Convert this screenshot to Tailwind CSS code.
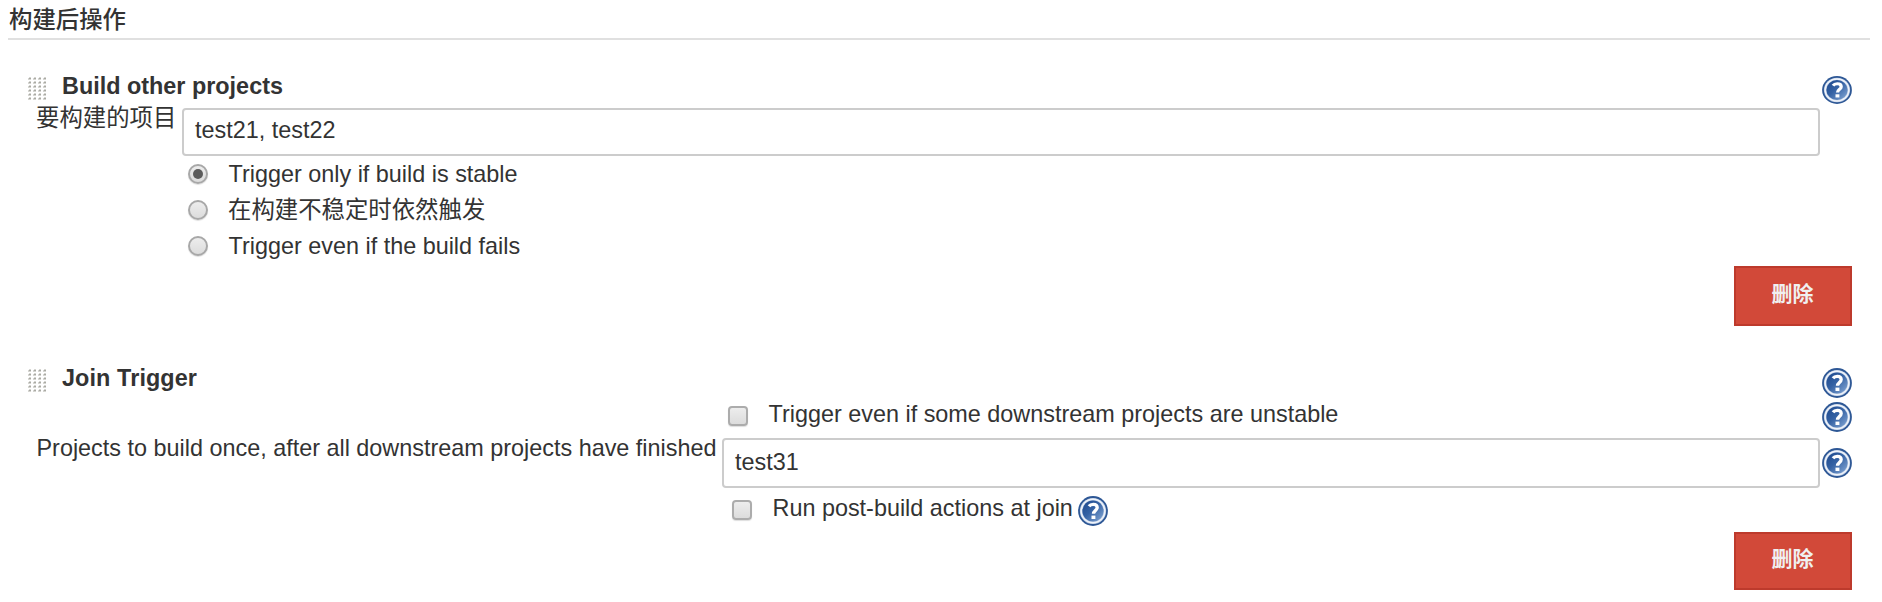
<!DOCTYPE html>
<html lang="zh-CN">
<head>
<meta charset="utf-8">
<title>构建后操作</title>
<script src="https://cdn.jsdelivr.net/npm/@tailwindcss/browser@4"></script>
</head>
<body class="h-[602px] overflow-hidden bg-white font-['Liberation_Sans','Noto_Sans_CJK_SC',sans-serif] text-[23.4px] leading-[30px] text-[#333] whitespace-nowrap">
<svg class="absolute size-0">
  <defs>
    <linearGradient id="blue" x1="0" y1="0" x2="1" y2="1"><stop offset="0" stop-color="#1c478c"/><stop offset=".45" stop-color="#3562a4"/><stop offset="1" stop-color="#86a9d6"/></linearGradient>
    <pattern id="dots" width="5" height="4" patternUnits="userSpaceOnUse"><path d="M0 1h1V0h2v3H0z" fill="#d6d6d2"/><path d="M1 1h2v1H1z" fill="#aaaaa4"/></pattern>
    <symbol id="grip" viewBox="0 0 18 23"><rect width="18" height="23" fill="url(#dots)"/></symbol>
    <symbol id="help" viewBox="0 0 30 30">
      <circle cx="15" cy="15" r="14.9" fill="#2d5795"/>
      <circle cx="15" cy="15" r="13.1" fill="#b9cae3"/>
      <circle cx="15" cy="15" r="12.5" fill="#f0f4fa"/>
      <circle cx="15" cy="15" r="11.100" fill="#b9cae3"/>
      <circle cx="15" cy="15" r="10.6" fill="url(#blue)"/>
      <path d="M11 10.300C12 8.900 13.400 8.300 15.200 8.300c2.500 0 4 1.200 4 3.100 0 2.900-3.700 3.200-3.700 6.400" fill="none" stroke="#fff" stroke-width="3.300"/>
      <rect x="13.500" y="19.600" width="3.900" height="3.400" fill="#fff"/>
    </symbol>
  </defs>
</svg>

<h2 class="mr-3 ml-2 h-10 border-b-2 border-[#e0e0e0] pt-[5px] pl-px font-medium">构建后操作</h2>

<section class="mt-7 pr-[30px]">
  <header class="flex h-10 items-start pl-7">
    <svg class="mt-[9px] h-[23px] w-[18px]"><use href="#grip"/></svg>
    <h3 class="mt-[3px] ml-4 font-bold">Build other projects</h3>
    <svg class="mt-2 ml-auto h-7 w-[30px]" viewBox="0 0 30 30" preserveAspectRatio="none"><use href="#help"/></svg>
  </header>
  <div class="flex h-12 items-start pl-9">
    <div class="-mt-[5px] w-[146px]">要构建的项目</div>
    <div class="mr-8 h-12 flex-1 rounded-[4px] border-2 border-[#ccc] pt-[5px] pl-[11px]">test21, test22</div>
  </div>
  <div class="flex flex-col pl-[188px]">
    <label class="flex h-9 items-center gap-[20.500px]"><span class="flex size-5 items-center justify-center rounded-full border-2 border-[#a8a8a8] bg-linear-to-b from-[#ededed] to-[#dcdcdc] shadow-[0_1px_1px_#0002]"><span class="size-2.5 rounded-full bg-[#5c5c5c]"></span></span>Trigger only if build is stable</label>
    <label class="flex h-9 items-center gap-5"><span class="size-5 rounded-full border-2 border-[#a8a8a8] bg-linear-to-b from-[#ededed] to-[#dcdcdc] shadow-[0_1px_1px_#0002]"></span>在构建不稳定时依然触发</label>
    <label class="flex h-9 items-center gap-[20.500px]"><span class="size-5 rounded-full border-2 border-[#a8a8a8] bg-linear-to-b from-[#ededed] to-[#dcdcdc] shadow-[0_1px_1px_#0002]"></span>Trigger even if the build fails</label>
  </div>
  <button class="mt-[2px] ml-auto block h-[60px] w-[118px] border-2 border-[#bd3a2c] bg-[#d24939] pr-px pb-1 text-[21px] leading-[30px] font-bold text-[#f0f0f0]">删除</button>
</section>

<section class="mt-[34px] pr-[30px]">
  <header class="flex h-[42px] items-start pl-7">
    <svg class="mt-[9px] h-[23px] w-[18px]"><use href="#grip"/></svg>
    <h3 class="mt-[3px] ml-4 tracking-[0.100px] font-bold">Join Trigger</h3>
    <svg class="mt-2 ml-auto size-[30px]"><use href="#help"/></svg>
  </header>
  <div class="flex h-9 items-start pl-[728px]">
    <span class="mt-1 size-5 rounded-[4px] border-2 border-[#acacac] bg-linear-to-b from-[#ededed] to-[#dcdcdc] shadow-[0_1px_1px_#0002]"></span>
    <span class="-mt-[3px] ml-[20.500px]">Trigger even if some downstream projects are unstable</span>
    <svg class="ml-auto size-[30px]"><use href="#help"/></svg>
  </div>
  <div class="flex h-[50px] items-start pl-9">
    <div class="-mt-[5px] w-[686px] pl-[0.500px]">Projects to build once, after all downstream projects have finished</div>
    <div class="h-[50px] flex-1 rounded-[4px] border-2 border-[#ccc] pt-[7px] pl-[11px]">test31</div>
    <svg class="mt-[10px] ml-[2px] size-[30px]"><use href="#help"/></svg>
  </div>
  <div class="flex h-11 items-start pl-[732px]">
    <span class="mt-3 size-5 rounded-[4px] border-2 border-[#acacac] bg-linear-to-b from-[#ededed] to-[#dcdcdc] shadow-[0_1px_1px_#0002]"></span>
    <span class="mt-[5px] ml-5 w-[306px] pl-[0.500px]">Run post-build actions at join</span>
    <svg class="mt-2 size-[30px]"><use href="#help"/></svg>
  </div>
  <button class="ml-auto block h-[58px] w-[118px] border-2 border-[#bd3a2c] bg-[#d24939] pr-px pb-1 text-[21px] leading-[30px] font-bold text-[#f0f0f0]">删除</button>
</section>
</body>
</html>
